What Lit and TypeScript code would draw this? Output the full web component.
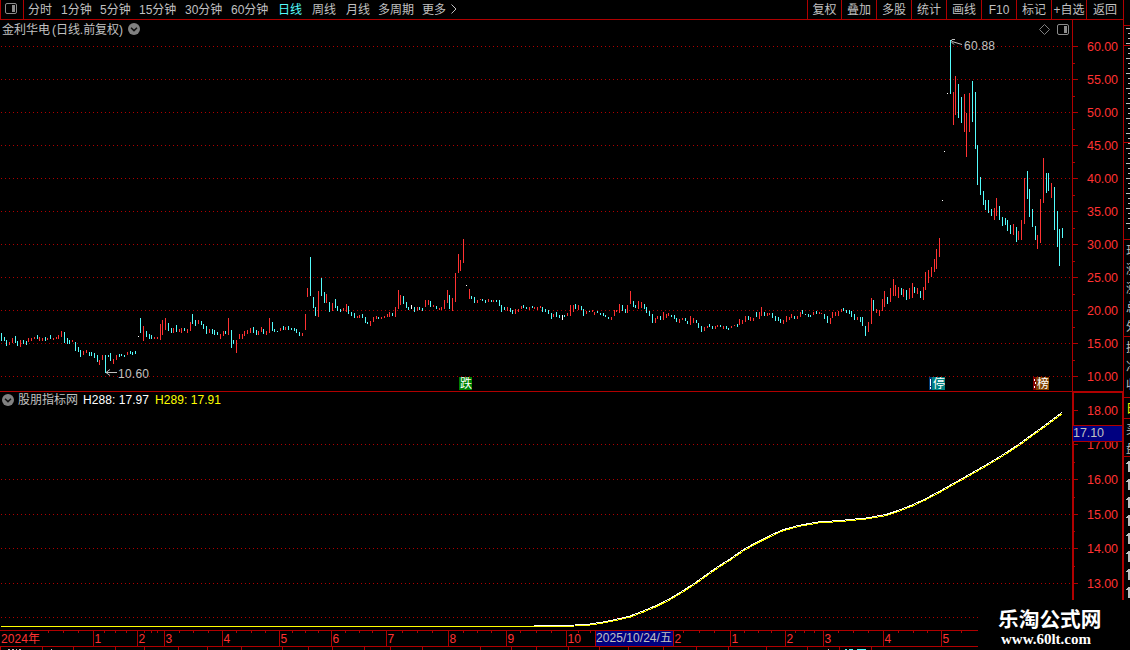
import { LitElement, html, svg, css } from "lit";
import { customElement } from "lit/decorators.js";

const RED = "#ff3232";
const CYAN = "#54fcfc";
const LINE = "#b00000";
const GREY = "#c0c0c0";

type Bar = { x: number; y: number; h: number; fill: string };

// Each block lists bars as "x,top,bottom,colour" in thirds of a pixel from its origin.
const BLOCKS: [number, number, string][] = [
  [0, 300, `4,98,122c 13,110,122c 19,120,137c 28,125,135r 37,113,128r 46,107,128c 52,122,137c 61,119,140r 70,119,131c 79,122,134c 85,113,125r 94,113,122r 103,110,116r 112,105,116c 118,110,122r 127,113,122r 136,110,122c 142,113,119r 151,105,116c 160,113,119r 169,110,116r 175,105,116r 184,93,110r 193,96,128c 202,113,131c 208,119,131c 217,119,124r 226,126,152c 235,140,155c 241,150,170c 250,152,164r 259,150,158r 268,155,167c 274,155,167c 283,158,173c 292,165,185c 298,179,194r 307,164,179r 316,165,220c 325,165,171c 331,158,182c 340,176,191r 349,164,179r 358,162,170c 364,162,167c 373,165,170c 382,155,164r 391,152,161c 397,155,164c 406,152,161c 415,108,111w 421,54,98c 430,78,122r 439,93,110c 448,102,116c 454,105,117c 463,110,116r 472,110,116r 481,72,119r 487,60,104r 496,54,90r 505,69,93c 514,84,98c 520,84,98r 529,75,96c 538,87,96r 544,84,98r 553,84,93c 562,87,98r 571,66,93r 577,42,72c 586,60,78c 595,60,72r 604,63,75c 610,72,87c 619,78,101c 628,87,98r 637,87,101c 643,90,104c 652,96,104c 661,102,116r 670,93,107r 676,93,101c 685,54,104r 694,90,143c 700,120,131c 709,120,158r 718,102,116r 727,102,116r 733,93,107r 742,90,101r 751,84,98r 760,81,98c 769,90,104c 775,93,104r 784,81,96r 790,87,102c 799,93,105r 808,54,98r 817,66,93c 823,87,96c 832,93,96c`],
  [260, 230, `61,294,303r 70,288,300c 76,291,300r 85,288,300c 94,294,300c 103,294,303c 109,297,308c 118,306,318c 127,309,318r 136,252,300r 142,174,201r 151,81,198c 160,201,234c 166,231,258c 175,183,261r 184,144,198c 193,186,219c 199,192,219r 208,216,246c 217,219,243r 226,207,234c 232,228,243c 241,237,246c 250,234,243r 259,222,246r 265,228,252c 274,246,258c 283,249,264c 292,258,264r 298,255,264r 307,252,264c 316,261,279c 322,276,282c 331,273,288r 340,261,276r 349,258,267r 355,261,267c 364,261,267r 373,258,264r 382,252,261r 388,246,261r 397,249,258c 406,231,261r 415,180,237r 421,195,225r 430,198,222c 439,216,234c 445,231,240c 454,225,237w 463,231,246c 472,231,243r 478,231,240c 487,234,243c 496,210,231r 505,210,225r 511,213,231c 520,225,231r 529,228,237c 538,234,240r 544,231,240r 553,210,237r 562,180,219r 568,195,237c 577,204,243r 586,129,216r 595,72,129r 601,90,123r 610,27,99r 619,165,168w 628,177,207r 634,198,207c 643,201,219c 652,210,219r 661,207,210r 667,207,213c 676,210,219c 685,207,216r 694,210,216c 700,210,216r 709,210,216c 718,210,228c 724,225,246c 733,231,240c 742,231,243r 751,234,246c 757,240,252c 766,237,252r 775,237,246r 784,228,237r`],
  [520, 280, `10,75,84c 19,81,87c 28,81,90r 37,78,84c 43,81,87r 52,81,90r 61,78,84r 67,81,96c 76,87,96c 85,90,102c 94,99,117c 100,102,111r 109,96,111c 118,105,114c 127,105,120w 133,105,111c 142,99,108r 151,75,108r 160,75,96r 166,72,87c 175,75,90r 184,78,90c 190,87,108c 199,93,102r 208,93,96c 217,90,96r 223,96,105r 232,93,99c 241,99,105c 250,99,108c 256,105,111c 265,111,117c 274,111,120r 283,90,108r 289,90,96r 298,72,99r 307,75,93c 316,87,99c 322,75,99r 331,33,72r 340,63,81c 346,75,84c 355,63,87r 364,66,84r 373,72,87c 379,81,99c 388,93,108c 397,102,129c 406,114,129r 412,108,117r 421,108,120c 430,96,120r 439,102,114r 445,99,108r 454,105,111c 463,105,117c 469,114,126c 478,117,129r 487,114,120r 496,114,123c 502,123,132c 511,108,135r 520,114,129r 529,120,129c 535,129,144c 544,138,156c 553,141,153r 562,138,144r 568,132,141c 577,138,147c 586,138,147r 592,135,141r 601,135,141c 610,138,147r 619,138,147c 625,144,150c 634,138,144r 643,135,138r 652,132,141c 658,117,135r 667,120,132r 676,108,126r 685,108,120c 691,111,123r 700,114,123r 709,96,111c 718,96,117r 724,81,108r 733,96,108c 742,99,108r 748,99,105r 757,99,114c 766,108,123c 775,111,123c 781,117,129c 790,120,132r 799,108,126r 808,111,120r 814,102,114r 823,108,117c 832,108,117r`],
  [780, 220, `61,276,291r 67,270,282c 76,282,285c 85,282,291c 91,285,291c 100,276,285r 109,273,282c 118,276,282r 124,279,282r 133,282,297c 142,288,309c 151,294,312r 157,276,294r 166,276,288r 175,273,288r 184,267,276r 190,264,273c 199,270,279c 208,270,282c 214,273,291c 223,282,300c 232,291,300r 241,291,306c 247,291,318c 256,318,348c 265,306,336r 274,234,312r 280,240,273c 289,267,279r 298,270,288r 307,237,273r 313,213,261r 322,231,252c 331,204,246r 340,177,228r 346,195,228r 355,201,234r 364,204,225c 370,207,231r 379,210,240c 388,204,237r 397,189,234r 403,201,219c 412,204,222r 421,213,234c 430,201,240r 436,156,210r 445,150,189r 454,141,171r 463,117,156r 469,87,147r 478,54,111r`],
  [930, 30, `37,510,513w 43,363,366w 52,189,192w 61,30,192c 70,186,285r 76,138,255r 85,162,264c 94,201,279c 103,192,306r 109,249,381r 118,189,306r 127,153,276c 136,186,357c 142,345,465c 151,441,495c 160,483,525c 166,510,540c 175,510,549c 184,537,558c 193,534,570r 199,504,558r 208,528,570c 217,561,588c 226,564,585c 232,570,603c 241,585,612c 250,582,615r 259,591,636c 265,603,630r 274,570,630r 283,444,582r 292,423,507c 298,477,561c 307,537,591c 316,588,630c 322,615,657r 331,507,639r 340,384,519r 349,429,489c 355,429,483c 364,459,504r 373,471,600c 382,543,651c 388,597,708c 397,594,624c`],
];

const FILLS: Record<string, string> = { r: RED, c: CYAN, w: "#ffffff" };

const BARS: Bar[] = BLOCKS.flatMap(([ox, oy, list]) =>
  list.split(" ").map((item) => {
    const [x, top, end] = item.split(",");
    const bottom = parseInt(end, 10);
    return {
      x: ox + Math.floor(+x / 3),
      y: oy + Math.round(+top / 3),
      h: Math.max(1, Math.round((bottom - +top) / 3)),
      fill: FILLS[end.slice(-1)],
    };
  })
);

const hline = (x: number, y: number, w: number, h = 1, fill = LINE) =>
  svg`<rect x=${x} y=${y} width=${w} height=${h} fill=${fill} />`;

const dots = (y: number, end = 1071) =>
  svg`<line x1="1" x2=${end} y1=${y + 0.5} y2=${y + 0.5} stroke=${LINE} stroke-width="1" stroke-dasharray="1 3" />`;

const label = (x: number, y: number, text: string, len: number, fill = GREY) =>
  svg`<text x=${x} y=${y} fill=${fill} textLength=${len} lengthAdjust="spacing">${text}</text>`;

const layoutIcon = (x: number, y: number) => svg`
  <rect x=${x + 0.5} y=${y + 0.5} width="11" height="10" rx="1.5" fill="none" stroke="#8c8c8c" />
  <rect x=${x + 7} y=${y + 2} width="3" height="7" fill="#8c8c8c" />`;

const chevronBadge = (cx: number, cy: number) => svg`
  <circle cx=${cx} cy=${cy} r="6" fill="#808080" />
  <path d=${`M${cx - 3} ${cy - 1.2}l3 2.8l3 -2.8`} fill="none" stroke="#101010" stroke-width="1.5" />`;

@customElement("tool-bar")
class ToolBar extends LitElement {
  static styles = css`
    :host { display: flex; height: 19px; width: 1124px; border-bottom: 1px solid #b00000; color: #c0c0c0; font: 12px/19px "Liberation Sans", "Noto Sans CJK SC", sans-serif; white-space: nowrap; }
    .menu { display: block; width: 22px; border: solid #b00000; border-width: 0 1px; flex: none; }
    svg { display: block; }
    .periods { display: flex; flex: 1; padding: 1px 0 0 4px; height: 18px; }
    .active { color: #54fcfc; }
    .actions { display: flex; }
    .action { box-sizing: border-box; border-left: 1px solid #b00000; text-align: center; padding-top: 1px; height: 19px; }
    .last { border-right: 1px solid #b00000; }
  `;
  periods: [string, number][] = [["分时", 33], ["1分钟", 39], ["5分钟", 39], ["15分钟", 46], ["30分钟", 46], ["60分钟", 47], ["日线", 34], ["周线", 34], ["月线", 32], ["多周期", 44], ["更多", 28]];
  actions: [string, number][] = [["复权", 34], ["叠加", 35], ["多股", 35], ["统计", 35], ["画线", 35], ["F10", 35], ["标记", 35], ["+自选", 35], ["返回", 38]];
  render() {
    return html`
      <div class="menu"><svg width="22" height="19">${layoutIcon(4, 3)}</svg></div>
      <div class="periods">
        ${this.periods.map(([t, w]) => html`<span class=${t === "日线" ? "active" : ""} style="width:${w}px">${t}</span>`)}
        <svg width="8" height="18"><path d="M1.5 3.5l4.5 4.5l-4.5 4.5" fill="none" stroke="#c0c0c0" /></svg>
      </div>
      <div class="actions">
        ${this.actions.map(([t, w]) => html`<span class=${t === "返回" ? "action last" : "action"} style="width:${w}px">${t}</span>`)}
      </div>`;
  }
}

const panelText = css`
  :host { display: block; }
  svg { display: block; shape-rendering: crispEdges; font: 12px "Liberation Sans", "Noto Sans CJK SC", sans-serif; }
  text { white-space: pre; }
  .smooth { shape-rendering: auto; }
  .axis { font-size: 12.5px; }
`;

@customElement("price-panel")
class PricePanel extends LitElement {
  static styles = panelText;
  render() {
    const levels = [60, 55, 50, 45, 40, 35, 30, 25, 20, 15, 10];
    return html`<svg width="1124" height="371" viewBox="0 20 1124 371">
      ${levels.map((_, i) => dots(46 + i * 33))}
      ${hline(1072, 20, 1, 371)}${hline(1123, 20, 1, 371)}
      <g class="axis">
        ${levels.map((v, i) => svg`
          ${hline(1073, 46 + i * 33, 5)}
          ${i < 10 ? hline(1073, 63 + i * 33, 2) : ""}
          ${label(1087, 51 + i * 33, v.toFixed(2), 31, RED)}`)}
      </g>
      ${BARS.map((b) => hline(b.x, b.y, 1, b.h, b.fill))}
      ${label(2, 34, "金利华电", 48)}
      ${label(52, 34, "(日线.前复权)", 71)}
      <g class="smooth">
        ${chevronBadge(134, 29)}
        <path d="M1044.5 24.5l5 5l-5 5l-5 -5z" fill="none" stroke="#808080" />
        ${layoutIcon(1057, 24)}
        <path d="M117 372.5H106M110 369.5l-4 3l4 3" fill="none" stroke=${GREY} />
        <path d="M962 44.5l-10 -3M955 39.5h-3l-1 2l3 3" fill="none" stroke=${GREY} />
      </g>
      ${label(118, 378, "10.60", 31)}
      ${label(964, 50, "60.88", 31)}
      <g>
        <rect x="459" y="377" width="13" height="13" fill="#008000" />
        ${label(460, 388, "跌", 12, "#ffffff")}
        <rect x="929" y="377" width="4" height="13" fill="#003c78" />
        <rect x="932" y="377" width="13" height="13" fill="#008080" />
        <path d="M930.5 379v7M930.5 387v2" stroke="#fff" />
        ${label(933, 388, "停", 12, "#ffffff")}
        <rect x="1033" y="377" width="4" height="13" fill="#800000" />
        <rect x="1036" y="377" width="13" height="13" fill="#804000" />
        <path d="M1034.5 379v2M1035.5 382v2M1034.5 386v2" stroke="#fff" />
        ${label(1037, 388, "榜", 12, "#ffffff")}
      </g>
    </svg>`;
  }
}

const CURVE = "534,625.6 575,625 590,624 603,622 615,619.6 630,616 643,611 655,606 668,599.6 680,592.5 694,583.5 706,575 718,566.5 730,559 742,550.5 754,543.5 768,536.5 782,530 798,525.5 818,522 842,520.3 866,518 886,514.5 898,510.5 912,505 925,499 940,491 955,482.5 970,474 985,465.5 1000,456.5 1010,450 1020,443.5 1030,436 1046,424.5 1062,412.5";

@customElement("indicator-panel")
class IndicatorPanel extends LitElement {
  static styles = panelText;
  render() {
    const ticks: [number, string][] = [[410, "18.00"], [444, "17.00"], [479, "16.00"], [514, "15.00"], [548, "14.00"], [583, "13.00"]];
    return html`<svg width="1124" height="239" viewBox="0 391 1124 239">
      ${hline(0, 391, 1072)}
      ${[444, 479, 514, 548, 583].map((y) => dots(y))}
      ${dots(617, 978)}
      ${hline(1072, 391, 52, 2)}${hline(1072, 391, 2, 209)}${hline(1122, 391, 2, 209)}
      <g class="axis">
        ${ticks.map(([y, t]) => svg`${hline(1074, y, 4)}${label(1087, y + 5, t, 31, RED)}`)}
        ${[427, 462, 497, 531, 566].map((y) => hline(1074, y, 1))}
        <rect x="1073" y="425" width="49" height="17" fill="#000080" />
        ${hline(1073, 425, 49)}${hline(1073, 441, 49)}
        ${label(1073, 437, "17.10", 31)}
      </g>
      <polyline points=${CURVE} fill="none" stroke="#ffffff" stroke-width="1" />
      <polyline points=${CURVE} fill="none" stroke="#ffff00" stroke-width="1" transform="translate(0.5 1)" />
      ${hline(1, 626, 533, 1, "#ffff00")}
      <g class="smooth">${chevronBadge(8, 400)}</g>
      ${label(18, 404, "股朋指标网", 60)}
      ${label(83, 404, "H288: 17.97", 66, "#ffffff")}
      ${label(155, 404, "H289: 17.91", 66, "#ffff00")}
    </svg>`;
  }
}

@customElement("time-axis")
class TimeAxis extends LitElement {
  static styles = panelText;
  render() {
    const months: [number, string][] = [[93, "1"], [137, "2"], [164, "3"], [222, "4"], [279, "5"], [331, "6"], [386, "7"], [448, "8"], [506, "9"], [566, "10"], [673, "2"], [730, "1"], [785, "2"], [823, "3"], [883, "4"], [941, "5"]];
    const minor = [48, 63, 78, 104, 115, 126, 144, 151, 157, 179, 193, 208, 236, 251, 265, 292, 305, 318, 345, 359, 372, 402, 417, 432, 463, 477, 491, 520, 536, 551, 578, 590, 683, 699, 714, 744, 758, 771, 795, 804, 814, 838, 853, 868, 898, 913, 927, 961];
    const lower = [0, 42, 73, 115, 144, 178, 207, 241, 282, 308, 332, 364, 390, 422, 480, 511, 536, 568, 599, 628, 663, 696, 728, 766, 807, 839, 871];
    return html`<svg width="1124" height="20" viewBox="0 630 1124 20">
      ${hline(0, 630, 978)}${hline(0, 646, 978)}
      ${minor.map((x) => hline(x, 631, 1, 2))}
      ${lower.map((x) => hline(x, 647, 1, 3))}
      ${label(1, 643, "2024年", 39, RED)}
      ${months.map(([x, t]) => svg`${hline(x, 631, 1, 15)}<text x=${x + 1.5} y="643" fill=${RED}>${t}</text>`)}
      <rect x="596" y="631" width="77" height="15" fill="#000080" />
      ${hline(595, 631, 1, 15)}
      ${label(596, 642, "2025/10/24/五", 76)}
      <path d="M8 649.5h2M12 649.5h2M16 649.5h1M19 649.5h2M51 649.5h1M828 649.5h1" stroke=${GREY} />
      <path d="M845 649.5h2M849 649.5h4M857 649.5h9" stroke=${CYAN} />
    </svg>`;
  }
}

@customElement("side-strip")
class SideStrip extends LitElement {
  static styles = [panelText];
  render() {
    return html`<svg width="6" height="650" viewBox="1124 0 6 650">
      ${[25, 45, 142, 239, 336, 397, 418, 456].map((y) => hline(1124, y, 6))}
      ${Array.from({ length: 41 }, (_, i) => hline(i % 3 === 0 ? 1126 : 1128, 28 + i * 5, i % 3 === 0 ? 4 : 2, 1, GREY))}
      <g fill=${GREY}>
        <text x="1126" y="255">现</text><text x="1126" y="274">涨</text><text x="1126" y="293">涨</text>
        <text x="1126" y="312">总</text><text x="1126" y="331">外</text><text x="1126" y="352">换</text>
        <text x="1126" y="371">净</text><text x="1126" y="389">收</text>
        <text x="1126" y="413" fill="#ffff00">日</text><text x="1126" y="434">买</text><text x="1126" y="453">盘</text>
        ${[461, 479, 497, 515, 533, 551, 569, 587].map((y) => svg`<path d=${`M1126 ${y + 2}l2 -2h2v11h-2v-8h-2z`} />`)}
      </g>
    </svg>`;
  }
}

@customElement("app-root")
class AppRoot extends LitElement {
  static styles = css`
    :host { display: flex; width: 1130px; height: 650px; overflow: hidden; background: #000; position: relative; }
    .workspace { width: 1124px; flex: none; }
    .watermark { position: absolute; left: 978px; top: 600px; width: 152px; height: 50px; box-sizing: border-box; padding: 5px 0 0 20px; background: #000; color: #fff; }
    .name { font: 700 20.7px/26px "Noto Sans CJK SC", sans-serif; white-space: nowrap; }
    .site { font: bold 15px/17px "Liberation Serif", serif; padding-left: 3px; }
  `;
  render() {
    return html`
      <div class="workspace">
        <tool-bar></tool-bar>
        <price-panel></price-panel>
        <indicator-panel></indicator-panel>
        <time-axis></time-axis>
      </div>
      <side-strip></side-strip>
      <div class="watermark">
        <div class="name">乐淘公式网</div>
        <div class="site">www.60lt.com</div>
      </div>`;
  }
}
